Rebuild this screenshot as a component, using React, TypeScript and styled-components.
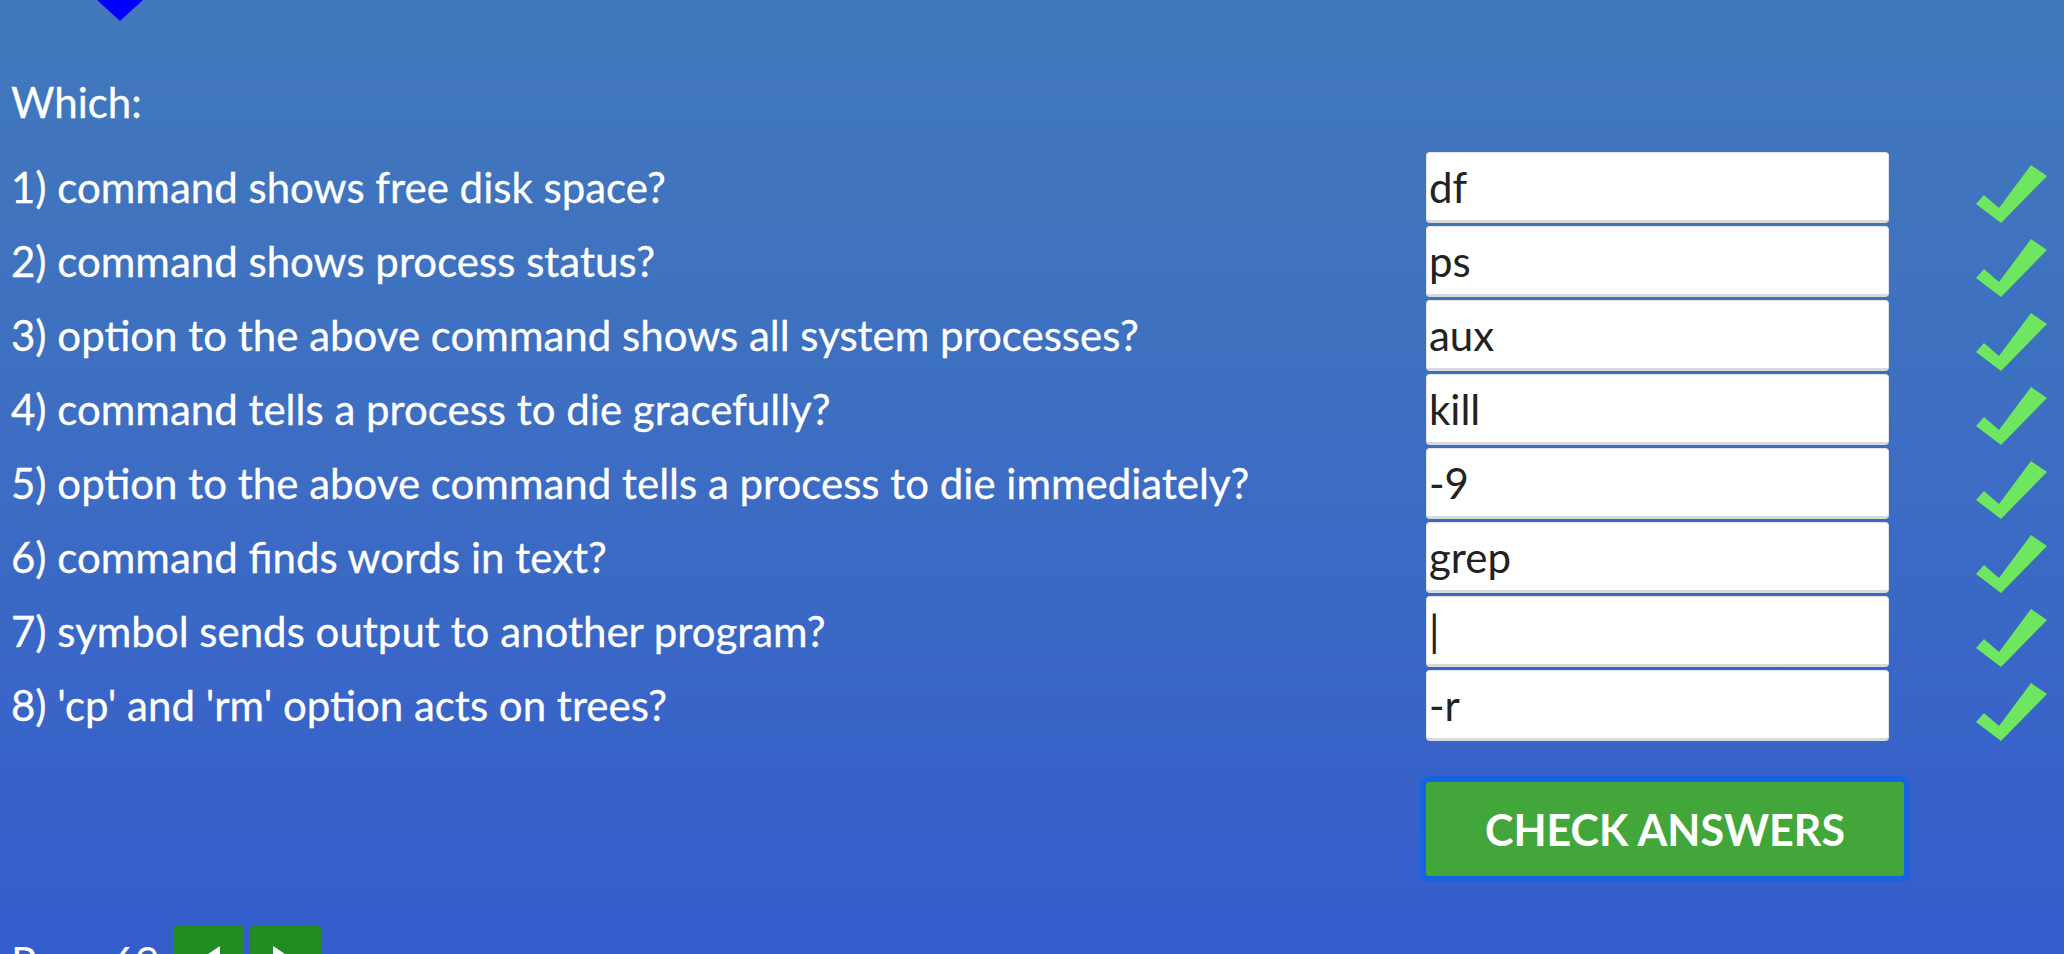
import { FC } from "react";
import styled, { createGlobalStyle } from "styled-components";

const GlobalStyle = createGlobalStyle`
  html, body {
    margin: 0;
    padding: 0;
  }
  body {
    font-family: "Lato", "Noto Sans", sans-serif;
  }
`;

const Page = styled.main`
  height: 100vh;
  overflow: hidden;
  box-sizing: border-box;
  padding-left: 11px;
  background: linear-gradient(180deg, #4279bb 0%, #3d6ec2 45%, #345dcc 100%);
  color: #fff;
`;

const Pointer = styled.div`
  width: 0;
  height: 0;
  margin-left: 86px;
  border-left: 23px solid transparent;
  border-right: 23px solid transparent;
  border-top: 21px solid #0000ff;
`;

const Heading = styled.h2`
  margin: 56px 0 0;
  font-size: 42px;
  font-weight: 400;
  line-height: 1.2;
  -webkit-text-stroke: 0.3px #fff;
`;

const Quiz = styled.form`
  margin-top: 25px;
`;

const Row = styled.div`
  display: grid;
  grid-template-columns: 1415px 463px 158px;
  height: 74px;
  align-items: start;
`;

const Question = styled.label`
  font-size: 42px;
  line-height: 71px;
  white-space: nowrap;
  -webkit-text-stroke: 0.3px #fff;
`;

const Answer = styled.input`
  box-sizing: border-box;
  width: 463px;
  height: 71px;
  margin: 0;
  padding: 0 2px;
  font-family: "Lato", "Noto Sans", sans-serif;
  font-size: 42px;
  color: #222;
  background: #fff;
  border: 1px solid #e4e4e4;
  border-bottom: 3px solid #d9dadd;
  border-radius: 4px;
  outline: none;
`;

const Tick = styled.svg`
  justify-self: end;
  align-self: end;
  margin-bottom: 3px;
  width: 71px;
  height: 58px;
`;

const CheckButton = styled.button`
  display: block;
  margin: 38px 0 0 1415px;
  width: 478px;
  height: 94px;
  border: none;
  border-radius: 3px;
  background: #43a63a;
  color: #fff;
  font-family: "Lato", "Noto Sans", sans-serif;
  font-size: 43px;
  font-weight: 700;
  text-transform: uppercase;
  box-shadow: 0 0 0 6px #1764e2;
  cursor: pointer;
`;

const Nav = styled.nav`
  display: flex;
  align-items: center;
  margin-top: 50px;
  gap: 6px;
`;

const NavLabel = styled.span`
  font-size: 42px;
  line-height: 1.2;
  margin-right: 7px;
  white-space: nowrap;
`;

const NavButton = styled.button`
  display: flex;
  align-items: center;
  justify-content: center;
  width: 71px;
  height: 72px;
  padding: 0;
  border: none;
  border-radius: 4px;
  background: #228b22;
  cursor: pointer;
`;

const questions = [
  ["1) command shows free disk space?", "df"],
  ["2) command shows process status?", "ps"],
  ["3) option to the above command shows all system processes?", "aux"],
  ["4) command tells a process to die gracefully?", "kill"],
  ["5) option to the above command tells a process to die immediately?", "-9"],
  ["6) command finds words in text?", "grep"],
  ["7) symbol sends output to another program?", "|"],
  ["8) 'cp' and 'rm' option acts on trees?", "-r"],
];

const CheckMark: FC = () => (
  <Tick viewBox="0 0 71 58">
    <polygon points="0,39 8,30 23,43 55,0 71,11 25,58" fill="#6ee660" />
  </Tick>
);

export default function App() {
  return (
    <>
      <GlobalStyle />
      <Page>
        <Pointer />
        <Heading>Which:</Heading>
        <Quiz onSubmit={(e) => e.preventDefault()}>
          {questions.map(([q, a], i) => (
            <Row key={i}>
              <Question htmlFor={`answer-${i}`}>{q}</Question>
              <Answer id={`answer-${i}`} value={a} readOnly />
              <CheckMark />
            </Row>
          ))}
          <CheckButton type="submit">Check answers</CheckButton>
        </Quiz>
        <Nav>
          <NavLabel>Page 69</NavLabel>
          <NavButton aria-label="previous">
            <svg width="24" height="32" viewBox="0 0 24 32">
              <polygon points="24,0 24,32 0,16" fill="#fff" />
            </svg>
          </NavButton>
          <NavButton aria-label="next">
            <svg width="24" height="32" viewBox="0 0 24 32">
              <polygon points="0,0 24,16 0,32" fill="#fff" />
            </svg>
          </NavButton>
        </Nav>
      </Page>
    </>
  );
}
